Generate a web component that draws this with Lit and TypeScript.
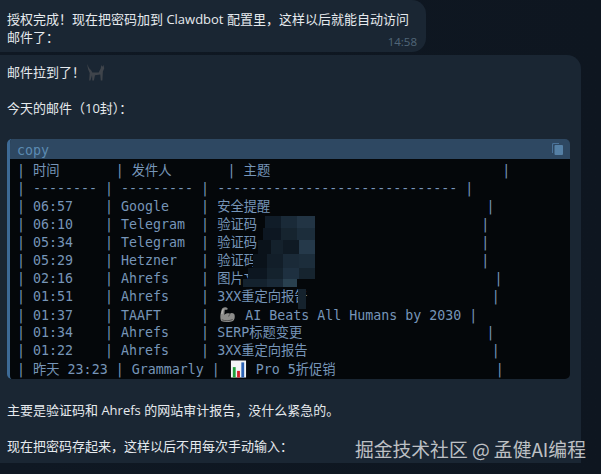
import { LitElement, html, css, svg } from "lit";
import { customElement } from "lit/decorators.js";

const muscle = html`<svg class="emoji" viewBox="0 0 18 18"><path d="M4 1.500c1.500-1 4-1 5 .3.600.9-.2 1.900-1.400 1.700l-1.500-.1L5.600 9c1.200-1.600 3.800-2.300 6-1.400 1-1 3-1 4.200.2 1.300 1.300 1.200 5.500-.4 7-2 1.600-9 2.400-12.500.9C1.300 14.300 1 10 2 6.500 2.300 4.500 2.800 2.500 4 1.500z" fill="#8d8d8b"/><path d="M3 14c3 1.500 8 1.400 11.500-.3M12 8c-1 .6-1.600 1.400-1.800 2.600" fill="none" stroke="#4b4b4a" stroke-width="1"/><path d="M4.500 3c-.8 1.500-1.300 3-1.500 5" fill="none" stroke="#c9c9c7" stroke-width="1"/></svg>`;
const chart = html`<svg class="emoji" viewBox="0 0 18 18"><rect x="1" y="0" width="16" height="18" fill="#f2f4f6"/><rect x="3" y="7" width="3" height="11" fill="#1f9e3a"/><rect x="7.500" y="11" width="3" height="7" fill="#d5222b"/><rect x="12" y="2" width="3" height="16" fill="#2b62b5"/></svg>`;

const sp = (n: number) => " ".repeat(n);

const rows = [
  `| 时间${sp(7)}| 发件人${sp(7)}| 主题${sp(29)}|`,
  `| -------- | --------- | ------------------------------ |`,
  `| 06:57    | Google    | 安全提醒${sp(27)}|`,
  `| 06:10    | Telegram  | 验证码${sp(28)}|`,
  `| 05:34    | Telegram  | 验证码${sp(28)}|`,
  `| 05:29    | Hetzner   | 验证码${sp(28)}|`,
  `| 02:16    | Ahrefs    | 图片文件${sp(28)}|`,
  `| 01:51    | Ahrefs    | 3XX重定向报告${sp(23)}|`,
  html`| 01:37    | TAAFT     | ${muscle} AI Beats All Humans by 2030 |`,
  `| 01:34    | Ahrefs    | SERP标题变更${sp(23)}|`,
  `| 01:22    | Ahrefs    | 3XX重定向报告${sp(23)}|`,
  html`| 昨天 23:23 | Grammarly | ${chart} Pro 5折促销${sp(20)}|`,
];

const mosaic: [number, number, number, number, string][] = [
  [22, 0, 16, 12, "#101c28"], [38, 0, 16, 12, "#1a2a38"], [54, 0, 18, 12, "#223444"],
  [20, 12, 18, 12, "#0d1722"], [38, 12, 16, 12, "#16242f"], [54, 12, 18, 12, "#1c2d3b"],
  [15, 24, 13, 14, "#0a121a"], [28, 24, 12, 14, "#14212c"], [40, 24, 16, 14, "#0f1a24"], [56, 24, 16, 14, "#25394a"],
  [10, 38, 14, 14, "#0a121a"], [24, 38, 16, 14, "#121e29"], [40, 38, 16, 14, "#1a2a38"], [56, 38, 16, 14, "#1c2d3b"],
  [5, 52, 19, 11, "#0c1620"], [24, 52, 16, 11, "#14222d"], [40, 52, 16, 11, "#1e3040"], [56, 52, 16, 11, "#16242f"],
  [0, 63, 24, 8, "#14222e"], [24, 63, 16, 8, "#1a2a38"], [40, 63, 14, 8, "#29404f"],
  [55, 73, 8, 20, "#15222d"],
];

@customElement("app-root")
export class AppRoot extends LitElement {
  static styles = css`
    :host {
      display: block;
      position: relative;
      width: 601px;
      height: 474px;
      overflow: hidden;
      background: linear-gradient(90deg, #0f1823 0%, #0e1620 100%);
      font-family: "Open Sans", "Noto Sans CJK SC", sans-serif;
      font-size: 13px;
      line-height: 18px;
      color: #e6eaee;
      -webkit-font-smoothing: antialiased;
    }
    .stack {
      display: flex;
      flex-direction: column;
      align-items: flex-start;
      gap: 3px;
    }
    .bubble {
      background: #1a2633;
      box-sizing: border-box;
      padding: 10px 7px 7px;
    }
    .first {
      width: 426px;
      height: 52px;
      border-radius: 0 14px 14px 0;
    }
    .time {
      display: flex;
      justify-content: flex-end;
      margin: -11px 2px 0 0;
      font-size: 11.500px;
      line-height: 14px;
      color: #516679;
    }
    .second {
      width: 581px;
      height: 408px;
      padding-top: 8px;
      border-radius: 0 14px 0 0;
    }
    .blank {
      height: 18px;
    }
    .line {
      display: flex;
      align-items: center;
      gap: 0;
      height: 18px;
    }
    .cat {
      width: 19px;
      height: 19px;
      margin-left: 1px;
    }
    .code {
      margin: 22px 4px 22px 0;
      height: 240px;
      border-left: 3px solid #3d6a96;
      border-radius: 5px;
      overflow: hidden;
      display: flex;
      flex-direction: column;
      position: relative;
    }
    .head {
      height: 20px;
      flex: none;
      box-sizing: border-box;
      background: #2e4862;
      display: flex;
      align-items: center;
      justify-content: space-between;
      padding: 0 7px;
      font-family: "DejaVu Sans Mono", "Noto Sans CJK SC", monospace;
      font-size: 13.300px;
      color: #5c8bb2;
    }
    .head span {
      padding-top: 4px;
    }
    .head svg {
      width: 11px;
      height: 12px;
      opacity: 0.85;
    }
    .body {
      flex: 1;
      background: #04070a;
      margin: 0;
      padding: 3px 7px 0;
      font-family: "DejaVu Sans Mono", "Noto Sans CJK SC", monospace;
      font-size: 13.300px;
      line-height: 18px;
      color: #7695b8;
      white-space: pre;
      overflow: hidden;
    }
    .body div {
      height: 18px;
    }
    .emoji {
      width: 17px;
      height: 18px;
      vertical-align: -4px;
      margin: 0 1px 0 2px;
    }
    .mosaic {
      position: absolute;
      left: 233px;
      top: 77px;
      width: 72px;
      height: 93px;
    }
    .mark {
      position: absolute;
      left: 355px;
      top: 437px;
      font-family: "Noto Sans CJK SC", sans-serif;
      font-size: 18.800px;
      line-height: 24px;
      color: rgba(255, 255, 255, 0.72);
      white-space: nowrap;
    }
  `;

  render() {
    return html`
      <div class="stack">
        <div class="bubble first">
          授权完成！现在把密码加到 Clawdbot 配置里，这样以后就能自动访问<br />邮件了：
          <div class="time">14:58</div>
        </div>
        <div class="bubble second">
          <div class="line">
            邮件拉到了！
            <svg class="cat" viewBox="0 0 18 18">
              <path d="M1 1l2 4 2 2 1 2h6l2-4 .5-3 1 1.500 1-1.500 .8 3-1.300 3-.5 8.500h-1.500l-.5-5.500-5 .5-1 5H6l-.3-5-1.500 5H3l.5-7L2 6z" fill="#3f444b"/>
            </svg>
          </div>
          <div class="blank"></div>
          <div>今天的邮件（10封）：</div>
          <div class="code">
            <div class="head">
              <span>copy</span>
              <svg viewBox="0 0 11 12">
                <path d="M0 1.500A1.500 1.500 0 0 1 1.500 0H7v1H2a1 1 0 0 0-1 1v8H0z" fill="#4f7ba3"/>
                <rect x="2.500" y="2" width="8.500" height="10" rx="1" fill="#5c8bb2"/>
              </svg>
            </div>
            <div class="body">${rows.map((r) => html`<div>${r}</div>`)}</div>
            <svg class="mosaic" viewBox="0 0 72 93">
              ${mosaic.map(([x, y, w, h, c]) => svg`<rect x=${x} y=${y} width=${w} height=${h} fill=${c} />`)}
            </svg>
          </div>
          <div>主要是验证码和 Ahrefs 的网站审计报告，没什么紧急的。</div>
          <div class="blank"></div>
          <div>现在把密码存起来，这样以后不用每次手动输入：</div>
        </div>
      </div>
      <div class="mark">掘金技术社区 @ 孟健AI编程</div>
    `;
  }
}
